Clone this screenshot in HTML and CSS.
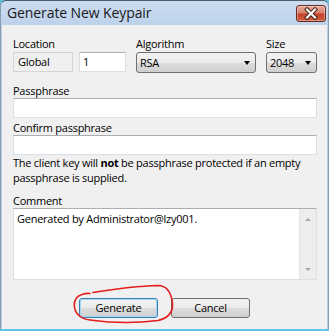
FILE: index.html
```html
<!DOCTYPE html>
<html>
<head>
<meta charset="utf-8">
<link rel="stylesheet" href="styles.css">
</head>
<body>
<div class="window">
  <div class="titlebar">
    <span class="title">Generate New Keypair</span>
    <div class="close">
      <svg width="30" height="17" viewBox="0 0 30 17">
        <path d="M11 4.5 L19 12.5 M19 4.5 L11 12.5" stroke="#3a1a14" stroke-width="4" stroke-linecap="square"/>
        <path d="M11 4.5 L19 12.5 M19 4.5 L11 12.5" stroke="#ffffff" stroke-width="2.2" stroke-linecap="square"/>
      </svg>
    </div>
  </div>
  <div class="client">
    <div class="row-top">
      <div class="group g-loc">
        <div class="label">Location</div>
        <div class="loc-boxes">
          <div class="box disabled">Global</div>
          <div class="box edit num">1</div>
        </div>
      </div>
      <div class="group g-alg">
        <div class="label">Algorithm</div>
        <div class="combo"><span>RSA</span><i class="arrow"></i></div>
      </div>
      <div class="group g-size">
        <div class="label">Size</div>
        <div class="combo"><span>2048</span><i class="arrow"></i></div>
      </div>
    </div>
    <div class="label lbl-pass">Passphrase</div>
    <div class="box edit wide"></div>
    <div class="label lbl-confirm">Confirm passphrase</div>
    <div class="box edit wide"></div>
    <p class="note">The client key will <b>not</b> be passphrase protected if an empty passphrase is supplied.</p>
    <div class="label lbl-comment">Comment</div>
    <div class="memo">
      <div class="memo-text">Generated by Administrator@lzy001.</div>
      <div class="scroll">
        <i class="sarrow up"></i>
        <i class="sarrow down"></i>
      </div>
    </div>
    <div class="buttons">
      <div class="btn default">Generate</div>
      <div class="btn">Cancel</div>
    </div>
    <svg class="scribble" width="110" height="46" viewBox="70 281 110 46">
      <path d="M93 292.5 C115 289 140 286 158 285.5 C166 285.5 171 292 172.5 303 C173.5 313 168 318 158 320.5 C135 323.5 108 322.5 90 320 C80 318.5 75 313 74.3 306 C74 300 77 296 82 294.5 C85 293.5 88 293.3 90 293.5" fill="none" stroke="#e51c1c" stroke-width="1.6" stroke-linecap="round"/>
    </svg>
  </div>
</div>
</body>
</html>
```
FILE: styles.css
```css
html, body {
  margin: 0;
  padding: 0;
}
body {
  width: 329px;
  height: 331px;
  overflow: hidden;
  background: #5ec5e5;
  font-family: "Open Sans", "Noto Sans", sans-serif;
  font-size: 11px;
  letter-spacing: -0.25px;
  color: #000;
}
.window {
  width: 329px;
  height: 329px;
  box-sizing: border-box;
  display: flex;
  flex-direction: column;
  background: linear-gradient(#cddcf0, #b9d0ea 30px, #b7cde8);
  border-top: 1px solid #4f5c6c;
  border-left: 1px solid #8a9bb0;
  border-right: 1px solid #8a9bb0;
  border-radius: 6px 6px 0 0;
  padding: 0 1px 0 1px;
}
.titlebar {
  height: 24px;
  flex: none;
  display: flex;
  align-items: flex-start;
  justify-content: space-between;
}
.title {
  margin: 3px 0 0 5px;
  font-size: 14px;
  line-height: 18px;
  color: #1a1a1a;
  letter-spacing: -0.1px;
}
.close {
  margin: 4px 1px 0 0;
  width: 30px;
  height: 17px;
  box-sizing: border-box;
  border: 1px solid #6b2a21;
  border-radius: 3px;
  background: linear-gradient(#eaa898, #d9806b 45%, #c4442c 55%, #cf5a40);
  box-shadow: inset 0 0 0 1px rgba(255,255,255,0.35);
  position: relative;
}
.close svg {
  position: absolute;
  left: -1px;
  top: -1px;
}
.client {
  flex: 1;
  position: relative;
  background: #f0f0f0;
  padding: 11px 10px 0 11px;
}
.label {
  line-height: 15px;
  white-space: nowrap;
}
.row-top {
  display: flex;
  gap: 10px;
}
.group .label {
  margin-bottom: 1px;
}
.loc-boxes {
  display: flex;
  gap: 6px;
}
.box {
  box-sizing: border-box;
  height: 20px;
  line-height: 18px;
  padding-left: 3px;
}
.disabled {
  width: 60px;
  border: 1px solid #d5d5d5;
  background: #f0f0f0;
  padding-left: 4px;
}
.edit {
  background: #fff;
  border: 1px solid #dbdfe6;
  border-top-color: #abadb3;
}
.num {
  width: 47px;
}
.wide {
  width: 304px;
}
.g-alg .combo {
  width: 120px;
}
.g-size .combo {
  width: 51px;
}
.combo {
  box-sizing: border-box;
  height: 21px;
  border: 1px solid #707070;
  border-radius: 3px;
  background: linear-gradient(#f2f2f2, #ebebeb 50%, #dddddd 50%, #cfcfcf);
  display: flex;
  align-items: center;
  justify-content: space-between;
  padding: 0 5px 0 3px;
  line-height: 18px;
}
.arrow {
  width: 0;
  height: 0;
  border-left: 3.5px solid transparent;
  border-right: 3.5px solid transparent;
  border-top: 4px solid #000;
  margin-top: 1px;
}
.lbl-pass {
  margin-top: 10px;
}
.lbl-confirm {
  margin-top: 2px;
}
.note {
  margin: 0;
  line-height: 15px;
}
.lbl-comment {
  margin-top: 8px;
}
.memo {
  box-sizing: border-box;
  width: 304px;
  height: 72px;
  margin-top: 0;
  background: #fff;
  border: 1px solid #dbdfe6;
  border-top-color: #abadb3;
  display: flex;
  justify-content: space-between;
}
.memo-text {
  padding: 2px 0 0 3px;
  line-height: 15px;
}
.scroll {
  width: 17px;
  background: #ededed;
  border-left: 1px solid #e3e3e3;
  display: flex;
  flex-direction: column;
  justify-content: space-between;
  align-items: center;
  padding: 9px 0 8px;
  box-sizing: border-box;
}
.sarrow {
  width: 0;
  height: 0;
  border-left: 3.5px solid transparent;
  border-right: 3.5px solid transparent;
}
.sarrow.up {
  border-bottom: 3px solid #a8a8a8;
}
.sarrow.down {
  border-top: 3px solid #a8a8a8;
}
.buttons {
  margin-top: 18px;
  display: flex;
  justify-content: center;
  gap: 13px;
  padding-right: 1px;
}
.btn {
  box-sizing: border-box;
  width: 79px;
  height: 20px;
  border: 1px solid #707070;
  border-radius: 3px;
  background: linear-gradient(#f2f2f2, #ebebeb 50%, #dddddd 50%, #cfcfcf);
  text-align: center;
  line-height: 18px;
}
.btn.default {
  border-color: #3c7fb1;
  box-shadow: inset 0 0 0 1px #9fd6f3;
}
.scribble {
  position: absolute;
  left: 68px;
  top: 256px;
}
```
